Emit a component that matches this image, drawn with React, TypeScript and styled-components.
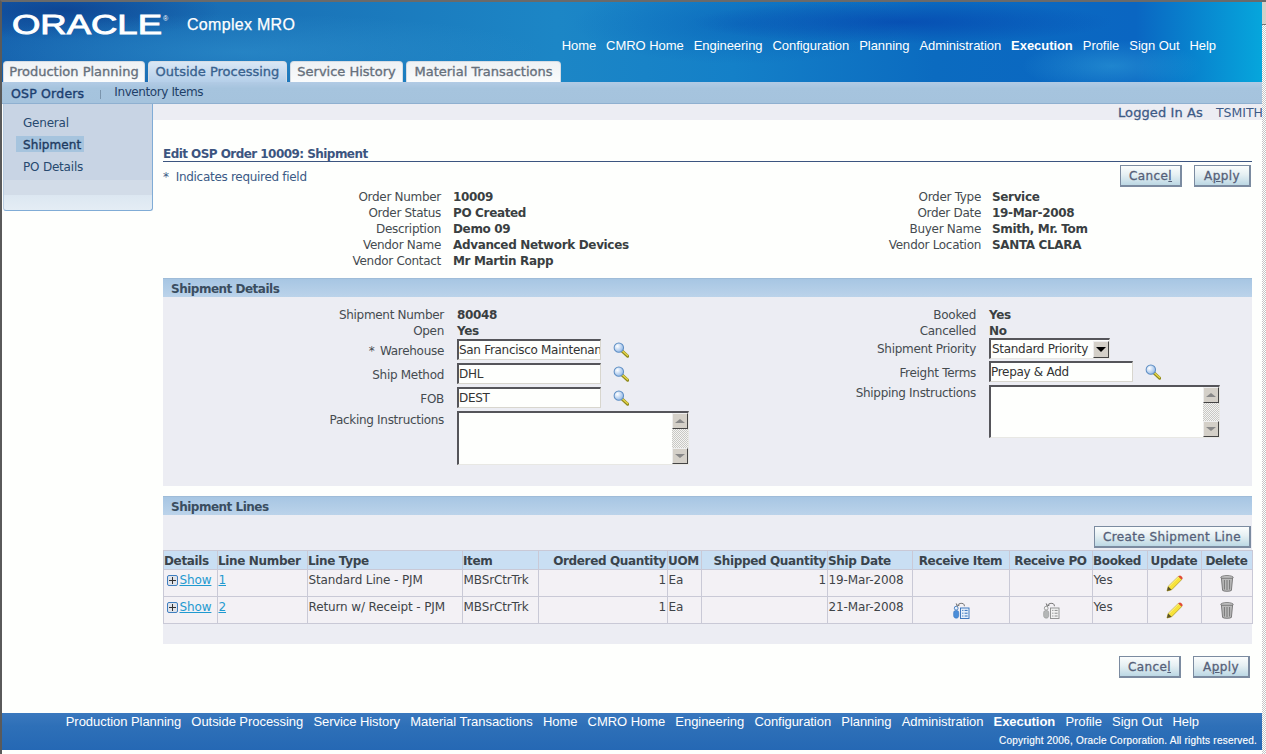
import React from "react";
import styled, { createGlobalStyle } from "styled-components";

const Global = createGlobalStyle`
  html, body { margin: 0; padding: 0; height: 754px; overflow: hidden; background: #fff; }
  body { font-family: "DejaVu Sans", sans-serif; font-size: 12px; color: #3c4448; }
  * { box-sizing: border-box; }
`;

const Win = styled.div`display: flex; width: 1266px; height: 754px;`;
const Main = styled.div`
  width: 1262px; height: 754px; display: flex; flex-direction: column;
  border-top: 2px solid #6a6a6a; border-left: 2px solid #5a5a5a; background: #fefffd;
`;
const Track = styled.div`
  width: 4px; height: 754px; display: flex; flex-direction: column;
  background: repeating-conic-gradient(#c6c6c6 0 25%, #fff 0 50%) 0 0 / 2px 2px;
`;
const TrackCap = styled.div`height: 25px; background: #d4d0c8; border-top: 2px solid #6a6a6a; border-bottom: 1px solid #777;`;

const Header = styled.header`
  height: 80px; position: relative; display: flex; flex-direction: column; justify-content: flex-end;
  background:
    radial-gradient(ellipse 210px 22px at 900px 20px, rgba(4,60,170,.6), transparent),
    radial-gradient(ellipse 90px 26px at 1110px 64px, rgba(70,190,230,.35), transparent),
    radial-gradient(ellipse 170px 40px at 740px 22px, rgba(6,90,180,.5), transparent),
    radial-gradient(ellipse 300px 38px at 240px 50px, rgba(50,150,210,.5), transparent),
    radial-gradient(ellipse 160px 30px at 60px 8px, rgba(10,50,130,.6), transparent),
    linear-gradient(90deg, #1560ac 0, #1a73b8 22%, #1c86c6 44%, #1480c8 58%, #0b6bc0 74%, #0a66c2 90%, #06a6dc 100%);
`;
const Brand = styled.div`display: flex; align-items: flex-start; padding: 5px 0 0 9px; position: absolute; top: 0; left: 0;`;
const Logo = styled.svg`display: block; width: 160px; height: 34px;`;
const AppName = styled.div`
  font-family: "Liberation Sans", sans-serif; font-size: 16px; font-weight: 400; color: #fff;
  margin: 9px 0 0 16px; letter-spacing: .3px; -webkit-text-stroke: .25px #fff;
`;
const TopNav = styled.nav`
  display: flex; justify-content: flex-end; gap: 10px; padding-right: 46px; margin-bottom: 7px;
`;
const FootNav = styled.nav`display: flex; justify-content: flex-end; gap: 10.2px; padding: 0 63px 0 0; height: 17px;`;
const NavLink = styled.span<{ $on?: boolean }>`
  font-family: "Liberation Sans", sans-serif; font-size: 13px; line-height: 17px; color: #fff; letter-spacing: -.05px;
  font-weight: ${(p) => (p.$on ? 700 : 400)}; white-space: nowrap;
`;
const Tabs = styled.div`display: flex; gap: 3px; padding-left: 1px; height: 21px;`;
const Tab = styled.div<{ $on?: boolean; $w: number }>`
  width: ${(p) => p.$w}px; height: 21px; line-height: 19px; border-radius: 4px 4px 0 0; text-align: center;
  font-size: 13px; font-weight: 400; white-space: nowrap;
  -webkit-text-stroke: .35px currentColor;
  color: ${(p) => (p.$on ? "#38628f" : "#66707c")};
  border: 1px solid #d5dce4; border-bottom: 0;
  background: ${(p) => (p.$on ? "linear-gradient(#d9e7f5,#b5cfe9)" : "linear-gradient(#eef1f4,#fafbfc)")};
`;
const SubNav = styled.div`
  height: 22px; flex: none; display: flex; align-items: center; padding-left: 9px;
  background: linear-gradient(#b2cbe5 0, #a6c4de 30%, #a5c3dd 100%); border-bottom: 1px solid #8fb0d0;
`;
const SubOn = styled.span`font-size: 12.5px; font-weight: 400; color: #1c3f70; -webkit-text-stroke: .4px #1c3f70; letter-spacing: .2px; margin-top: 2px;`;
const SubSep = styled.span`width: 1px; height: 9px; background: #7b95ad; margin: 3px 13px 0 16px;`;
const SubLink = styled.span`font-size: 12px; color: #1f3f68; margin-top: -2px; letter-spacing: -.4px;`;

const Body = styled.div`flex: 1; display: flex; min-height: 0;`;
const Side = styled.aside`
  width: 150px; height: 107px; margin-left: 1px; flex: none; padding: 10px 0 0 12px;
  border-right: 1px solid #80acd6; border-bottom: 1px solid #80acd6; border-left: 1px solid #b9cde2;
  border-radius: 0 0 3px 3px;
  background: linear-gradient(#c8d4e4 0, #c8d4e4 76px, #d2dce8 76px, #d2dce8 91px, #dce7f1 91px, #e4edf5 100%);
`;
const SideItem = styled.div<{ $on?: boolean }>`
  height: 16px; margin-bottom: 6px; line-height: 18px; padding: 0 0 0 7px; font-size: 12px; color: #27496f; letter-spacing: -.2px;
  width: fit-content; min-width: 68px;
  ${(p) => p.$on && "background:#a6c4de; -webkit-text-stroke:.35px #1d3a60; color:#1d3a60; letter-spacing:.1px;"}
`;
const Content = styled.main`flex: 1; min-width: 0; display: flex; flex-direction: column;`;
const UserStrip = styled.div`
  height: 16px; background: #ecedf3; display: flex; justify-content: flex-end; align-items: center; gap: 13px; color: #3d5a86;
`;
const UserLabel = styled.span`-webkit-text-stroke: .3px #3d5a86; font-size: 13px; letter-spacing: .1px;`;
const UserName = styled.span`font-size: 12.5px; margin-right: -1px;`;
const Inner = styled.div`flex: 1; padding: 24px 10px 0 10px; display: flex; flex-direction: column;`;
const Title = styled.h1`
  margin: 0; height: 18px; line-height: 20px; font-size: 12px; font-weight: 700; color: #3c5580;
  border-bottom: 1px solid #3c5580; letter-spacing: -.55px;
`;
const ActionRow = styled.div`display: flex; justify-content: space-between; align-items: flex-start; height: 27px; padding: 3px 1px 0 0;`;
const Req = styled.div`color: #3b5a85; line-height: 17px; margin-top: 4px; letter-spacing: -.3px;`;
const Btns = styled.div`display: flex; gap: 12px;`;
const Btn = styled.button<{ $w: number }>`
  width: ${(p) => p.$w}px; height: 22px; padding: 0; font-family: inherit; font-size: 12px; color: #556078; letter-spacing: .4px;
  -webkit-text-stroke: .3px #556078; border: 1px solid #7b8ba0; border-width: 1px 2px 2px 1px;
  background: linear-gradient(#fbfdfd, #e6f0f3 45%, #bcd8e4); cursor: pointer; white-space: nowrap; line-height: 18px;
`;
const Two = styled.div<{ $h?: number }>`
  display: grid; grid-template-columns: 540px 1fr; ${(p) => p.$h && `height:${p.$h}px;`}
`;
const Fields = styled.div<{ $w: number; $g: number }>`
  display: grid; grid-template-columns: ${(p) => p.$w}px 1fr; column-gap: ${(p) => p.$g}px; align-content: start;
`;
const Lbl = styled.div<{ $h?: number; $lh?: number }>`
  height: ${(p) => p.$h ?? 16}px; line-height: ${(p) => p.$lh ?? p.$h ?? 16}px; text-align: right; white-space: nowrap; color: #454b50; letter-spacing: -.3px;
`;
const Val = styled.div<{ $h?: number }>`
  height: ${(p) => p.$h ?? 16}px; line-height: 16px; font-weight: 700; color: #3a3f42; white-space: nowrap; letter-spacing: -.35px;
`;
const Ctl = styled.div<{ $h: number }>`
  height: ${(p) => p.$h}px; display: flex; align-items: flex-start; gap: 12px;
`;
const TextIn = styled.input`
  width: 144px; height: 21px; font: 12px "DejaVu Sans", sans-serif; color: #333; padding: 0; margin: 0; letter-spacing: -.3px;
  background: #fefffd; outline: 0; border-style: solid; border-width: 2px 1px 1px 2px;
  border-color: #55555a #d8d6ce #d8d6ce #55555a;
`;
const Sel = styled.div`
  width: 121px; height: 21px; display: flex; align-items: center; justify-content: space-between; padding-left: 1px; letter-spacing: -.3px;
  background: #fefffd; border-style: solid; border-width: 2px 1px 1px 2px; border-color: #55555a #e8e8e4 #e8e8e4 #55555a;
  color: #333; white-space: nowrap;
`;
const SelBtn = styled.span`
  width: 16px; height: 17px; background: #d4d0c8; border: 1px solid; border-color: #eee #444 #444 #eee;
  display: flex; align-items: center; justify-content: center;
  &::after { content: ""; border: 5px solid transparent; border-top: 5px solid #000; border-bottom: 0; }
`;
const TArea = styled.div<{ $w: number; $h: number }>`
  width: ${(p) => p.$w}px; height: ${(p) => p.$h}px; background: #fefffd; display: flex; justify-content: flex-end;
  border-style: solid; border-width: 2px 1px 1px 2px; border-color: #55555a #e8e8e4 #e8e8e4 #55555a;
`;
const SBar = styled.div`
  width: 16px; display: flex; flex-direction: column; justify-content: space-between;
  background: repeating-conic-gradient(#c8c8c4 0 25%, #f4f4f2 0 50%) 0 0 / 2px 2px;
`;
const SBtn = styled.div<{ $down?: boolean }>`
  height: 16px; background: #d4d0c8; border: 1px solid; border-color: #eee #444 #444 #eee;
  display: flex; align-items: center; justify-content: center;
  &::after { content: ""; border: 5px solid transparent; ${(p) => (p.$down ? "border-top:4px solid #888;border-bottom:0;" : "border-bottom:4px solid #888;border-top:0;")} }
`;
const SecHead = styled.h2<{ $gap?: number }>`
  margin: ${(p) => p.$gap ?? 0}px 0 0; height: 19px; line-height: 20px; padding-left: 8px; font-size: 12px; font-weight: 700; color: #3a4d60; letter-spacing: -.5px;
  background: linear-gradient(#a7c6e3, #bbd3ea); border-top: 1px solid #9fbcd8;
`;
const Panel = styled.section<{ $pt: number; $h: number }>`
  background: #ecedf3; padding-top: ${(p) => p.$pt}px; height: ${(p) => p.$h}px;
`;
const RightBtn = styled.div`display: flex; justify-content: flex-end; padding-right: 1px; margin-bottom: 2px;`;
const Table = styled.table`
  width: 1089px; table-layout: fixed; border-collapse: collapse; border: 1px solid #c9c9d6;
`;
const Th = styled.th<{ $r?: boolean; $c?: boolean }>`
  height: 19px; padding: 2px 1px 0 0; background: #c9dff3; border: 1px solid #c9c9d6; color: #3a444c; white-space: nowrap; overflow: hidden;
  font-size: 12px; font-weight: 700; letter-spacing: -.35px; line-height: 15px; text-align: ${(p) => (p.$r ? "right" : p.$c ? "center" : "left")};
`;
const Td = styled.td<{ $r?: boolean; $c?: boolean }>`
  height: 27px; padding: 0 1px 4px .5px; background: #f3f1f5; border: 1px solid #c9c9d6; color: #3f4448; white-space: nowrap; overflow: hidden; letter-spacing: -.12px;
  vertical-align: top; line-height: 21px; text-align: ${(p) => (p.$r ? "right" : p.$c ? "center" : "left")};
`;
const IconCell = styled(Td)`vertical-align: middle; padding: 1px 0 0; line-height: 0;`;
const Lnk = styled.a`color: #1f9ad0; text-decoration: underline; cursor: pointer;`;
const Plus = styled.span`
  display: inline-block; width: 11px; height: 11px; margin: 0 2px 0 2px; vertical-align: -2px; position: relative;
  border: 1px solid #3f7fc0; border-radius: 2px; background: #dfe3ea;
  &::before { content: ""; position: absolute; left: 1px; right: 1px; top: 4px; height: 1px; background: #333; }
  &::after { content: ""; position: absolute; top: 1px; bottom: 1px; left: 4px; width: 1px; background: #333; }
`;
const BottomBtns = styled.div`display: flex; justify-content: flex-end; gap: 12px; padding: 12px 2px 0 0;`;
const Footer = styled.footer`
  height: 37px; margin-bottom: 4px; flex: none; background: linear-gradient(#3a78be, #2e70b8 35%, #2568b4);
  display: flex; flex-direction: column;
`;
const Copy = styled.div`
  font-family: "Liberation Sans", sans-serif; font-size: 10px; line-height: 14px; color: #fff; text-align: right;
  padding: 4px 5px 0 0; letter-spacing: .22px; -webkit-text-stroke: .15px #fff;
`;

const Glass = () => (
  <svg width="16" height="16" viewBox="0 0 17 17">
    <defs>
      <radialGradient id="lens" cx=".35" cy=".35" r=".7"><stop offset="0" stopColor="#fff" /><stop offset="1" stopColor="#8fb6e6" /></radialGradient>
    </defs>
    <path d="M9.5 9.5L15.5 15" stroke="#8f8a1c" strokeWidth="3.4" strokeLinecap="round" />
    <path d="M9.5 9L15.5 14.4" stroke="#e6d44a" strokeWidth="1.6" strokeLinecap="round" />
    <circle cx="6.2" cy="6" r="5" fill="url(#lens)" stroke="#5f8fc4" strokeWidth="1.1" />
  </svg>
);
const GlassBox = styled.span`display: inline-flex; margin-top: 3px;`;
const Pencil = () => (
  <svg width="17" height="17" viewBox="0 0 17 17">
    <path d="M1 16l1.2-4.6L12.4 1.4l3.3 3.2L5.6 14.8z" fill="#f7e23a" stroke="#a68f10" strokeWidth=".7" />
    <path d="M12.4 1.4l3.3 3.2 1-1.2c0-1.4-1.6-3-3-3z" fill="#e24a35" />
    <path d="M1 16l1.2-4.6 3.4 3.4z" fill="#59532a" />
    <path d="M3 11.5l9.5-9.5" stroke="#fff79c" strokeWidth="1" />
  </svg>
);
const Trash = () => (
  <svg width="14" height="17" viewBox="0 0 14 17">
    <ellipse cx="7" cy="2.4" rx="6.2" ry="1.8" fill="#c9c9c9" stroke="#666" strokeWidth=".8" />
    <path d="M1.4 3.2L2.6 15.4c1.2 1.2 7.6 1.2 8.8 0L12.6 3.2z" fill="#b9b9b9" stroke="#666" strokeWidth=".8" />
    <path d="M4.4 5v9.5M7 5v10M9.6 5v9.5" stroke="#777" strokeWidth="1" />
  </svg>
);
const Receive = ({ on }: { on?: boolean }) => {
  const a = on ? "#4c8ed8" : "#b4b6b6";
  const b = on ? "#e6f0fc" : "#f2f2f2";
  const d = on ? "#2f6db8" : "#8a8c8c";
  return (
    <svg width="17" height="17" viewBox="0 0 17 17">
      <circle cx="3.2" cy="6.2" r="1.9" fill={b} stroke={d} strokeWidth=".8" />
      <path d="M.6 11C.6 9 1.6 8.4 3.2 8.4S5.8 9 5.8 11v2.6c0 1.6-1 2.6-2.6 2.6S.6 15.2.6 13.6z" fill={a} stroke={d} strokeWidth=".5" />
      <rect x="7.5" y="6" width="8.5" height="10.5" fill={b} stroke={d} strokeWidth=".9" />
      <path d="M9.2 8.4h1.2M11.6 8.4h3M9.2 11.2h1.2M11.6 11.2h3M9.2 14h1.2M11.6 14h3" stroke={d} strokeWidth="1" />
      <path d="M4.4 3.4C5.4 1.4 8.6.8 10.4 1.8c.8.5 1 1.4 1 2.4" fill="none" stroke="#666" strokeWidth=".9" />
      <path d="M3.2 1.4l1 2.8 2.4-1.2" fill="none" stroke="#666" strokeWidth=".9" />
    </svg>
  );
};

const top = ["Home", "CMRO Home", "Engineering", "Configuration", "Planning", "Administration", "Execution", "Profile", "Sign Out", "Help"];
const tabs = ["Production Planning", "Outside Processing", "Service History", "Material Transactions"];
const tabWidths = [142, 139, 113, 155];
const cols = [54, 90, 155, 76, 129, 34, 126, 85, 97, 83, 55, 54, 51];
const TextBox = ({ w, h }: { w: number; h: number }) => (
  <TArea $w={w} $h={h}><SBar><SBtn /><SBtn $down /></SBar></TArea>
);
const Links = ({ items, on }: { items: string[]; on: string }) => (
  <>{items.map((t) => <NavLink key={t} $on={t === on}>{t}</NavLink>)}</>
);
const Lookup = () => <GlassBox><Glass /></GlassBox>;

const Row = ({ n, type, date, recv }: { n: number; type: string; date: string; recv?: boolean }) => (
  <tr>
    <Td><Plus /><Lnk>Show</Lnk></Td>
    <Td><Lnk>{n}</Lnk></Td>
    <Td>{type}</Td>
    <Td>MBSrCtrTrk</Td>
    <Td $r>1</Td>
    <Td>Ea</Td>
    <Td $r>{n === 1 ? "1" : ""}</Td>
    <Td>{date}</Td>
    <IconCell $c>{recv && <Receive on />}</IconCell>
    <IconCell $c>{recv && <Receive />}</IconCell>
    <Td>Yes</Td>
    <IconCell $c><Pencil /></IconCell>
    <IconCell $c><Trash /></IconCell>
  </tr>
);

export default function App() {
  return (
    <Win>
      <Global />
      <Main>
        <Header>
          <Brand>
            <Logo viewBox="0 0 160 34">
              <text x="1" y="26.5" textLength="150" lengthAdjust="spacingAndGlyphs" fontFamily="'Liberation Sans', sans-serif" fontSize="27" fill="#fff" stroke="#fff" strokeWidth=".9">ORACLE</text>
              <text x="152" y="14" fontFamily="'Liberation Sans', sans-serif" fontSize="7" fill="#fff">®</text>
            </Logo>
            <AppName>Complex MRO</AppName>
          </Brand>
          <TopNav><Links items={top} on="Execution" /></TopNav>
          <Tabs>{tabs.map((t, i) => <Tab key={t} $w={tabWidths[i]} $on={t === "Outside Processing"}>{t}</Tab>)}</Tabs>
        </Header>
        <SubNav><SubOn>OSP Orders</SubOn><SubSep /><SubLink>Inventory Items</SubLink></SubNav>
        <Body>
          <Side>
            <SideItem>General</SideItem>
            <SideItem $on>Shipment</SideItem>
            <SideItem>PO Details</SideItem>
          </Side>
          <Content>
            <UserStrip><UserLabel>Logged In As</UserLabel><UserName>TSMITH</UserName></UserStrip>
            <Inner>
              <Title>Edit OSP Order 10009: Shipment</Title>
              <ActionRow>
                <Req>*&nbsp; Indicates required field</Req>
                <Btns><Btn $w={62}>Cance<u>l</u></Btn><Btn $w={57}>A<u>p</u>ply</Btn></Btns>
              </ActionRow>
              <Two $h={89}>
                <Fields $w={278} $g={12}>
                  <Lbl>Order Number</Lbl><Val>10009</Val>
                  <Lbl>Order Status</Lbl><Val>PO Created</Val>
                  <Lbl>Description</Lbl><Val>Demo 09</Val>
                  <Lbl>Vendor Name</Lbl><Val>Advanced Network Devices</Val>
                  <Lbl>Vendor Contact</Lbl><Val>Mr Martin Rapp</Val>
                </Fields>
                <Fields $w={278} $g={11}>
                  <Lbl>Order Type</Lbl><Val>Service</Val>
                  <Lbl>Order Date</Lbl><Val>19-Mar-2008</Val>
                  <Lbl>Buyer Name</Lbl><Val>Smith, Mr. Tom</Val>
                  <Lbl>Vendor Location</Lbl><Val>SANTA CLARA</Val>
                </Fields>
              </Two>
              <SecHead>Shipment Details</SecHead>
              <Panel $pt={10} $h={189}>
                <Two>
                  <Fields $w={281} $g={13}>
                    <Lbl>Shipment Number</Lbl><Val>80048</Val>
                    <Lbl>Open</Lbl><Val>Yes</Val>
                    <Lbl $h={24}>*&thinsp; Warehouse</Lbl><Ctl $h={24}><TextIn readOnly value="San Francisco Maintenance" /><Lookup /></Ctl>
                    <Lbl $h={24}>Ship Method</Lbl><Ctl $h={24}><TextIn readOnly value="DHL" /><Lookup /></Ctl>
                    <Lbl $h={24}>FOB</Lbl><Ctl $h={24}><TextIn readOnly value="DEST" /><Lookup /></Ctl>
                    <Lbl $lh={18}>Packing Instructions</Lbl><Ctl $h={54}><TextBox w={232} h={54} /></Ctl>
                  </Fields>
                  <Fields $w={273} $g={13}>
                    <Lbl>Booked</Lbl><Val>Yes</Val>
                    <Lbl $h={15} $lh={16}>Cancelled</Lbl><Val $h={15}>No</Val>
                    <Lbl $h={23}>Shipment Priority</Lbl><Ctl $h={23}><Sel>Standard Priority<SelBtn /></Sel></Ctl>
                    <Lbl $h={24}>Freight Terms</Lbl><Ctl $h={24}><TextIn readOnly value="Prepay & Add" /><Lookup /></Ctl>
                    <Lbl $lh={16}>Shipping Instructions</Lbl><Ctl $h={53}><TextBox w={231} h={53} /></Ctl>
                  </Fields>
                </Two>
              </Panel>
              <SecHead $gap={10}>Shipment Lines</SecHead>
              <Panel $pt={11} $h={129}>
                <RightBtn><Btn $w={157}>Create Shipment Line</Btn></RightBtn>
                <Table>
                  <colgroup>{cols.map((w, i) => <col key={i} width={w} />)}</colgroup>
                  <thead>
                    <tr>
                      <Th>Details</Th><Th>Line Number</Th><Th>Line Type</Th><Th>Item</Th>
                      <Th $r>Ordered Quantity</Th><Th>UOM</Th><Th $r>Shipped Quantity</Th><Th>Ship Date</Th>
                      <Th $c>Receive Item</Th><Th $c>Receive PO</Th><Th>Booked</Th><Th $c>Update</Th><Th $c>Delete</Th>
                    </tr>
                  </thead>
                  <tbody>
                    <Row n={1} type="Standard Line - PJM" date="19-Mar-2008" />
                    <Row n={2} type="Return w/ Receipt - PJM" date="21-Mar-2008" recv />
                  </tbody>
                </Table>
              </Panel>
              <BottomBtns><Btn $w={62}>Cance<u>l</u></Btn><Btn $w={57}>A<u>p</u>ply</Btn></BottomBtns>
            </Inner>
          </Content>
        </Body>
        <Footer>
          <FootNav><Links items={[...tabs, ...top]} on="Execution" /></FootNav>
          <Copy>Copyright 2006, Oracle Corporation. All rights reserved.</Copy>
        </Footer>
      </Main>
      <Track><TrackCap /></Track>
    </Win>
  );
}
